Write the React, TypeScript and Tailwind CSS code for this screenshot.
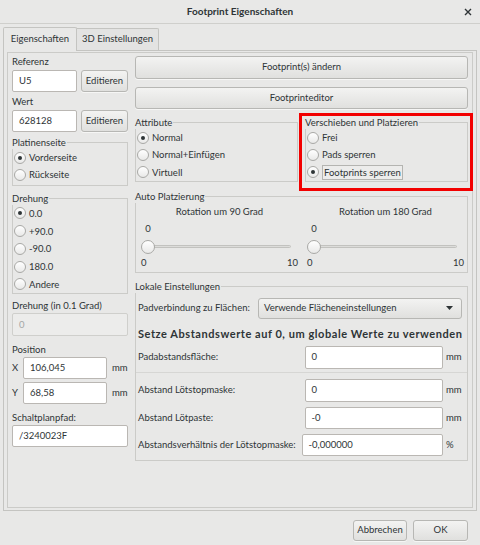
import clsx from "clsx";

interface RadioProps {
  label: string;
  checked?: boolean;
  focus?: boolean;
  tall?: boolean;
}

function Radio({ label, checked = false, focus = false, tall = false }: RadioProps) {
  return (
    <div className={clsx("flex items-center pl-[1px]", tall ? "h-[17.75px]" : "h-[17.3px]")}>
      <span className="flex h-[12px] w-[12px] shrink-0 items-center justify-center rounded-full border border-[#a9a9a6] bg-linear-to-b from-white to-[#e9e9e8]">
        {checked && <span className="h-[4px] w-[4px] rounded-full bg-[#2e3436]" />}
      </span>
      <span
        className={clsx(
          "ml-[3px] whitespace-nowrap leading-[13px]",
          focus && "border border-[#b4b4b1] bg-[#ececeb] px-[1px]"
        )}
      >
        {label}
      </span>
    </div>
  );
}

function Button({ label, className }: { label: string; className?: string }) {
  return (
    <div
      className={clsx(
        "flex items-center justify-center whitespace-nowrap rounded-[3px] border border-[#b7b7b4] bg-linear-to-b from-[#f3f3f2] to-[#e0e0de] shadow-[0_1px_0_rgba(255,255,255,0.6)]",
        className
      )}
    >
      {label}
    </div>
  );
}

function Field({ value, className, disabled }: { value: string; className?: string; disabled?: boolean }) {
  return (
    <div
      className={clsx(
        "flex items-center rounded-[2px] border px-[6px]",
        disabled
          ? "border-[#cfcfcc] bg-[#ececeb] text-[#a4a7a6]"
          : "border-[#bab7b3] bg-white",
        className
      )}
    >
      {value}
    </div>
  );
}

function Group({
  title,
  className,
  children,
}: {
  title: string;
  className?: string;
  children: React.ReactNode;
}) {
  return (
    <fieldset className={clsx("min-w-0 border border-[#cbcbc8]", className)}>
      <legend className="-ml-[1px] pr-[1px] leading-[13px]">{title}</legend>
      {children}
    </fieldset>
  );
}

function Slider({ title }: { title: string }) {
  return (
    <div className="flex w-[157px] flex-col">
      <div className="h-[14px] text-center leading-[14px]">{title}</div>
      <div className="mt-[3px] h-[13px] w-[14px] text-center leading-[13px]">0</div>
      <div className="relative mt-[4.7px] flex h-[14px] items-center">
        <div className="absolute left-[7px] right-[7px] h-[3px] rounded-full border border-[#c2c2bf] bg-[#dcdcda]" />
        <div className="relative h-[14px] w-[14px] rounded-full border border-[#a9a9a6] bg-linear-to-b from-white to-[#e9e9e8]" />
      </div>
      <div className="mt-[2.3px] flex h-[13px] justify-between leading-[13px]">
        <span>0</span>
        <span>10</span>
      </div>
    </div>
  );
}

function ClearanceRow({
  label,
  value,
  unit,
  wide,
  className,
}: {
  label: string;
  value: string;
  unit: string;
  wide?: boolean;
  className?: string;
}) {
  return (
    <div className={clsx("flex items-center pl-[2px] pr-[5px]", className)}>
      <span className="flex-1 whitespace-nowrap">{label}</span>
      <Field value={value} className={clsx("h-[22.7px]", wide ? "w-[141.5px]" : "w-[138.5px]")} />
      <span className="w-[19px] pl-[3px]">{unit}</span>
    </div>
  );
}

export default function App() {
  return (
    <div className="flex h-[545px] w-[480px] flex-col bg-[#e8e8e7] font-['Lato','Liberation_Sans',sans-serif] text-[9.5px] text-[#2e3436]">
      {/* title bar */}
      <div className="flex h-[24px] items-center border-b border-[#cfcfcc]">
        <div className="w-[24px]" />
        <div className="flex-1 text-center text-[10px] font-bold">Footprint Eigenschaften</div>
        <div className="flex w-[24px] items-center justify-center">
          <svg width="8" height="8" viewBox="0 0 8 8" className="text-[#2e3436]">
            <path d="M1 1L7 7M7 1L1 7" stroke="currentColor" strokeWidth="1.4" />
          </svg>
        </div>
      </div>

      {/* tabs */}
      <div className="mt-[3px] flex pl-[3px]">
        <div className="relative z-10 -mb-[1px] flex h-[24px] w-[74px] items-center justify-center rounded-t-[2px] border-x border-t border-[#c4c4c1] bg-[#e8e8e7]">
          Eigenschaften
        </div>
        <div className="mt-[1px] flex h-[22px] w-[82px] items-center justify-center rounded-tr-[2px] border-r border-t border-[#c4c4c1] bg-[#e3e3e2]">
          3D Einstellungen
        </div>
      </div>

      {/* notebook page */}
      <div className="mx-[3px] h-[461px] border border-[#c4c4c1]">
        <div className="mx-[3px] mt-[1px] h-[456px] border border-[#cbcbc8] pl-[4px] pr-[4px] pt-[2px]">
          <div className="flex gap-[7px]">
            {/* left column */}
            <div className="flex w-[116px] flex-col">
              <div className="h-[14px] leading-[14px]">Referenz</div>
              <div className="mt-[1px] flex h-[22px] gap-[4px]">
                <Field value="U5" className="w-[65px]" />
                <Button label="Editieren" className="flex-1" />
              </div>
              <div className="mt-[3px] h-[14px] leading-[14px]">Wert</div>
              <div className="mt-[1px] flex h-[22px] gap-[4px]">
                <Field value="628128" className="w-[65px]" />
                <Button label="Editieren" className="flex-1" />
              </div>

              <Group title="Platinenseite" className="mt-[4px] pb-[1px]">
                <Radio label="Vorderseite" checked />
                <Radio label="Rückseite" />
              </Group>

              <Group title="Drehung" className="mt-[6px]">
                <Radio label="0.0" checked tall />
                <Radio label="+90.0" tall />
                <Radio label="-90.0" tall />
                <Radio label="180.0" tall />
                <Radio label="Andere" tall />
              </Group>

              <div className="mt-[5px] h-[14px] leading-[14px]">Drehung (in 0.1 Grad)</div>
              <Field value="0" disabled className="h-[23px]" />

              <div className="mt-[7px] h-[14px] leading-[14px]">Position</div>
              <div className="flex h-[22px] items-center">
                <span className="w-[11px]">X</span>
                <Field value="106,045" className="h-[22px] w-[84px]" />
                <span className="pl-[5px]">mm</span>
              </div>
              <div className="mt-[3px] flex h-[22px] items-center">
                <span className="w-[11px]">Y</span>
                <Field value="68,58" className="h-[22px] w-[84px]" />
                <span className="pl-[5px]">mm</span>
              </div>

              <div className="mt-[7px] h-[14px] leading-[14px]">Schaltplanpfad:</div>
              <Field value="/3240023F" className="h-[22px]" />
            </div>

            {/* right column */}
            <div className="flex w-[333px] flex-col">
              <Button label="Footprint(s) ändern" className="mt-[1px] h-[23px]" />
              <Button label="Footprinteditor" className="mt-[8px] h-[22px]" />

              <div className="mt-[7px] flex gap-[7px]">
                <Group title="Attribute" className="w-[163px]">
                  <Radio label="Normal" checked />
                  <Radio label="Normal+Einfügen" />
                  <Radio label="Virtuell" />
                </Group>
                <div className="relative flex-1">
                  <Group title="Verschieben und Platzieren" className="w-full">
                    <Radio label="Frei" />
                    <Radio label="Pads sperren" />
                    <Radio label="Footprints sperren" checked focus />
                  </Group>
                  <div className="pointer-events-none absolute -bottom-[9px] -left-[6px] -right-[5px] -top-[3px] border-[3px] border-[#f20000]" />
                </div>
              </div>

              <Group title="Auto Platzierung" className="mt-[8px] pb-[3px]">
                <div className="mt-[2px] flex gap-[9px] pl-[5px]">
                  <Slider title="Rotation um 90 Grad" />
                  <Slider title="Rotation um 180 Grad" />
                </div>
              </Group>

              <Group title="Lokale Einstellungen" className="mt-[7.5px] pb-[4px]">
                <div className="mt-[4.5px] flex h-[21px] items-center pl-[2px] pr-[5px]">
                  <span className="flex-1 whitespace-nowrap">Padverbindung zu Flächen:</span>
                  <div className="flex h-[21px] w-[204px] items-center justify-between rounded-[3px] border border-[#b7b7b4] bg-linear-to-b from-[#f3f3f2] to-[#e0e0de] pl-[5px] pr-[8px]">
                    <span>Verwende Flächeneinstellungen</span>
                    <svg width="7" height="4" viewBox="0 0 7 4">
                      <path d="M0 0H7L3.5 4Z" fill="#2e3436" />
                    </svg>
                  </div>
                </div>
                <div className="mt-[8px] h-[14px] whitespace-nowrap pl-[2px] text-[11px] font-bold leading-[14px] tracking-[0.55px]">
                  Setze Abstandswerte auf 0, um globale Werte zu verwenden
                </div>
                <ClearanceRow label="Padabstandsfläche:" value="0" unit="mm" className="mt-[5.3px]" />
                <div className="mt-[3.3px] h-px bg-[#d6d6d4]" />
                <ClearanceRow label="Abstand Lötstopmaske:" value="0" unit="mm" className="mt-[6px]" />
                <ClearanceRow label="Abstand Lötpaste:" value="-0" unit="mm" className="mt-[4.7px]" />
                <ClearanceRow
                  label="Abstandsverhältnis der Lötstopmaske:"
                  value="-0,000000"
                  unit="%"
                  wide
                  className="mt-[4.5px]"
                />
              </Group>
            </div>
          </div>
        </div>
      </div>

      {/* dialog buttons */}
      <div className="mt-[9px] flex justify-end gap-[6px] pr-[12px]">
        <Button label="Abbrechen" className="h-[21px] w-[54px]" />
        <Button label="OK" className="h-[21px] w-[55px]" />
      </div>
    </div>
  );
}
